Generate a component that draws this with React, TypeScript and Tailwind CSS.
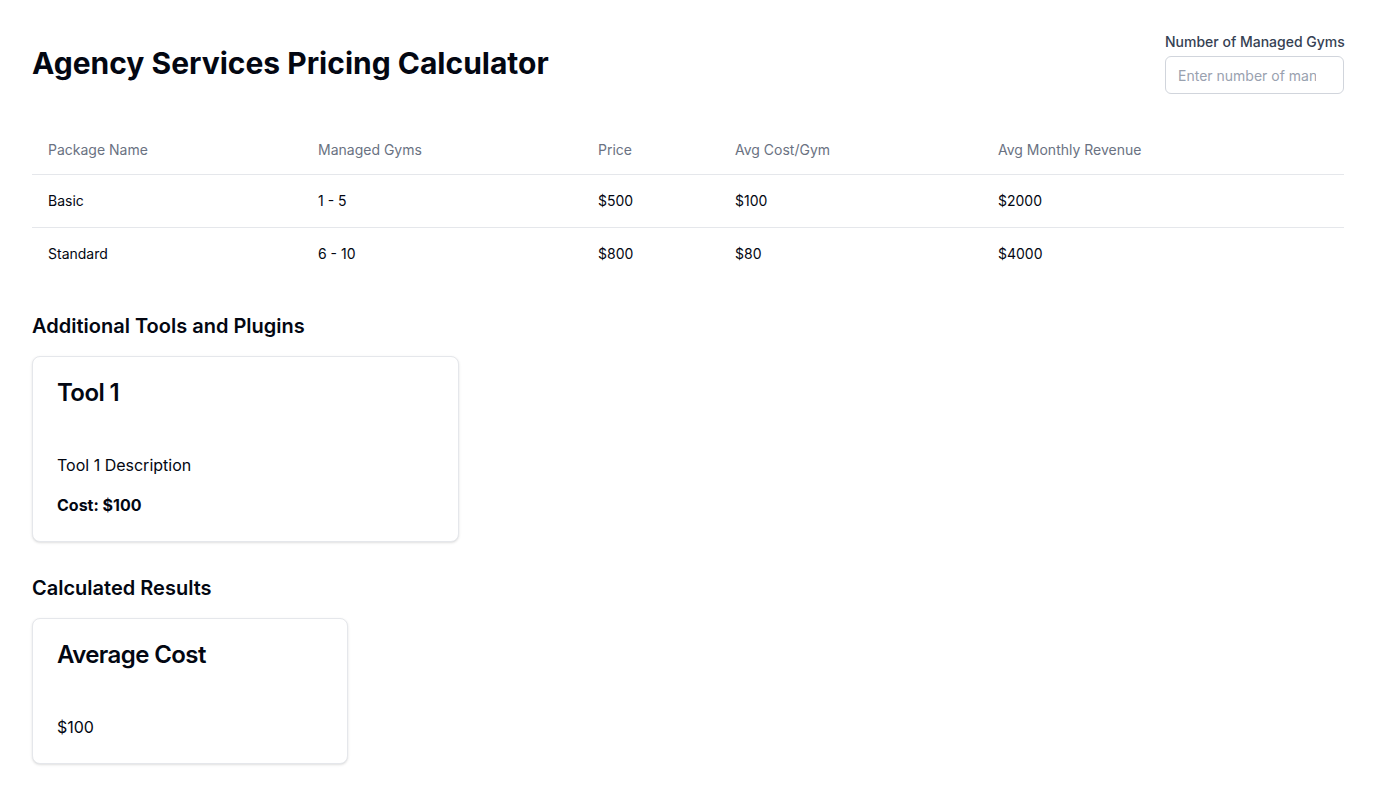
import React from 'react';

const packages = [
  { name: 'Basic', gyms: '1 - 5', price: '$500', avg: '$100', revenue: '$2000' },
  { name: 'Standard', gyms: '6 - 10', price: '$800', avg: '$80', revenue: '$4000' },
];

const Card: React.FC<{ title: string; children: React.ReactNode }> = ({ title, children }) => (
  <div className="rounded-lg border border-gray-200 bg-white shadow-sm p-6">
    <h3 className="text-2xl font-semibold leading-none tracking-tight text-gray-950">{title}</h3>
    <div className="mt-12">{children}</div>
  </div>
);

const App: React.FC = () => {
  return (
    <div className="min-h-screen bg-white p-8 text-gray-950" style={{ fontFamily: 'Inter, "Noto Sans", sans-serif' }}>
      <div className="flex items-center justify-between mb-8">
        <h1 className="text-3xl font-bold">Agency Services Pricing Calculator</h1>
        <div className="flex flex-col gap-1 w-[179px]">
          <label className="text-sm font-medium text-gray-700 leading-5 whitespace-nowrap">Number of Managed Gyms</label>
          <input
            type="number"
            placeholder="Enter number of managed gyms"
            className="h-[38px] w-full rounded-md border border-gray-300 px-3 text-sm placeholder:text-gray-400 outline-none"
          />
        </div>
      </div>

      <table className="w-full text-sm">
        <thead>
          <tr className="border-b border-gray-200 h-12 text-left text-gray-500">
            <th className="px-4 font-normal w-[270px]">Package Name</th>
            <th className="px-4 font-normal w-[280px]">Managed Gyms</th>
            <th className="px-4 font-normal w-[137px]">Price</th>
            <th className="px-4 font-normal w-[263px]">Avg Cost/Gym</th>
            <th className="px-4 font-normal">Avg Monthly Revenue</th>
          </tr>
        </thead>
        <tbody>
          {packages.map((p, i) => (
            <tr key={p.name} className={i < packages.length - 1 ? 'border-b border-gray-200' : ''}>
              <td className="p-4">{p.name}</td>
              <td className="p-4">{p.gyms}</td>
              <td className="p-4">{p.price}</td>
              <td className="p-4">{p.avg}</td>
              <td className="p-4">{p.revenue}</td>
            </tr>
          ))}
        </tbody>
      </table>

      <h2 className="mt-8 mb-4 text-xl leading-7 font-semibold">Additional Tools and Plugins</h2>
      <div className="grid grid-cols-3 gap-4">
        <Card title="Tool 1">
          <p className="text-base">Tool 1 Description</p>
          <p className="mt-4 text-base font-bold">Cost: $100</p>
        </Card>
      </div>

      <h2 className="mt-8 mb-4 text-xl leading-7 font-semibold">Calculated Results</h2>
      <div className="grid grid-cols-4 gap-4">
        <Card title="Average Cost">
          <p className="text-base">$100</p>
        </Card>
      </div>
    </div>
  );
};

export default App;
